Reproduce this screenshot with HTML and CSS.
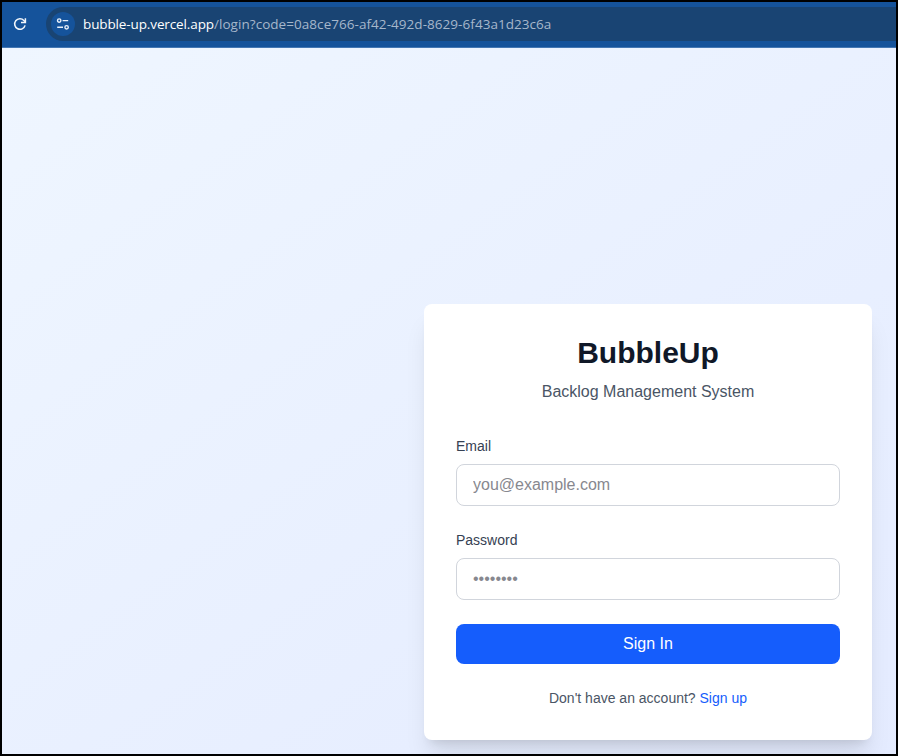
FILE: index.html
```html
<!DOCTYPE html>
<html lang="en">
<head>
<meta charset="utf-8">
<title>BubbleUp</title>
<link rel="stylesheet" href="styles.css">
</head>
<body>
<div class="window">
  <header class="toolbar">
    <svg class="reload" width="16" height="16" viewBox="0 0 16 16" fill="none" stroke="#f2f6fb" stroke-width="1.5">
      <path d="M13.1 9.4A5.3 5.3 0 1 1 11.9 4.4L13.2 5.8"/>
      <path d="M13.4 2.2v4.2H9"/>
    </svg>
    <div class="address">
      <span class="site-info">
        <svg width="14" height="14" viewBox="0 0 14 14" fill="none" stroke="#e9f0fa" stroke-width="1.4">
          <circle cx="3.2" cy="3.6" r="1.7"/>
          <path d="M6.6 3.6h5.6M1.2 10.3h5.8"/>
          <circle cx="10.6" cy="10.3" r="1.7"/>
        </svg>
      </span>
      <span class="url"><span class="host">bubble-up.vercel.app</span><span class="path">/login?code=0a8ce766-af42-492d-8629-6f43a1d23c6a</span></span>
    </div>
  </header>
  <div class="viewport">
    <main class="page">
      <section class="card">
        <h1>BubbleUp</h1>
        <p class="subtitle">Backlog Management System</p>
        <form>
          <div class="field">
            <label for="email">Email</label>
            <input id="email" type="email" placeholder="you@example.com">
          </div>
          <div class="field">
            <label for="password">Password</label>
            <input id="password" type="password" placeholder="••••••••">
          </div>
          <button type="button">Sign In</button>
        </form>
        <p class="signup">Don't have an account? <a href="#">Sign up</a></p>
      </section>
    </main>
  </div>
</div>
</body>
</html>
```
FILE: styles.css
```css
* {
  box-sizing: border-box;
  margin: 0;
}

body {
  font-family: "Liberation Sans", Arial, sans-serif;
  font-size: 16px;
  line-height: 24px;
  overflow: hidden;
}

.window {
  display: flex;
  flex-direction: column;
  width: 898px;
  height: 756px;
  border: 2px solid #000;
  overflow: hidden;
}

.toolbar {
  display: flex;
  flex: none;
  align-items: center;
  height: 46px;
  padding: 0 0 1px 10px;
  background: #15539b;
  border-bottom: 1px solid #4477b3;
}

.reload {
  flex: none;
  margin-right: 18px;
}

.address {
  display: flex;
  flex: 1;
  align-items: center;
  height: 34px;
  padding-left: 5px;
  background: #194473;
  border-radius: 17px 0 0 17px;
}

.site-info {
  display: flex;
  align-items: center;
  justify-content: center;
  width: 24px;
  height: 24px;
  margin-right: 8px;
  background: #15539b;
  border-radius: 50%;
}

.url {
  font-family: "Open Sans", "Noto Sans", sans-serif;
  font-size: 13.5px;
  line-height: 20px;
  white-space: nowrap;
}

.host {
  color: #fff;
  letter-spacing: -0.12px;
}

.path {
  color: #a6b7cb;
  letter-spacing: 0.05px;
}

.viewport {
  flex: 1;
  min-height: 0;
  overflow: hidden;
}

/* The page is larger than the visible part of the window. */
.page {
  display: flex;
  align-items: center;
  justify-content: center;
  width: 1292px;
  height: 948px;
  background: linear-gradient(to bottom right in oklab, #eff6ff, #e0e7ff);
}

.card {
  width: 448px;
  padding: 32px;
  background: #fff;
  border-radius: 8px;
  box-shadow: 0 20px 25px -5px rgba(0, 0, 0, 0.1), 0 8px 10px -6px rgba(0, 0, 0, 0.1);
}

h1 {
  margin: -1px 0 9px;
  color: #101828;
  font-size: 30px;
  line-height: 36px;
  text-align: center;
}

.subtitle {
  margin-bottom: 32px;
  color: #4a5565;
  text-align: center;
}

form {
  display: flex;
  flex-direction: column;
  gap: 24px;
}

label {
  display: block;
  margin-bottom: 8px;
  color: #364153;
  font-size: 14px;
  line-height: 20px;
}

input {
  display: block;
  width: 100%;
  height: 42px;
  padding: 8px 16px;
  background: #fff;
  border: 1px solid #d1d5dc;
  border-radius: 8px;
  font: inherit;
}

input::placeholder {
  color: #87888f;
}

button {
  height: 40px;
  padding: 0;
  color: #fff;
  background: #155dfc;
  border: 0;
  border-radius: 8px;
  font: inherit;
}

.signup {
  margin-top: 24px;
  color: #4a5565;
  font-size: 14px;
  line-height: 20px;
  text-align: center;
}

.signup a {
  color: #155dfc;
  text-decoration: none;
}
```
